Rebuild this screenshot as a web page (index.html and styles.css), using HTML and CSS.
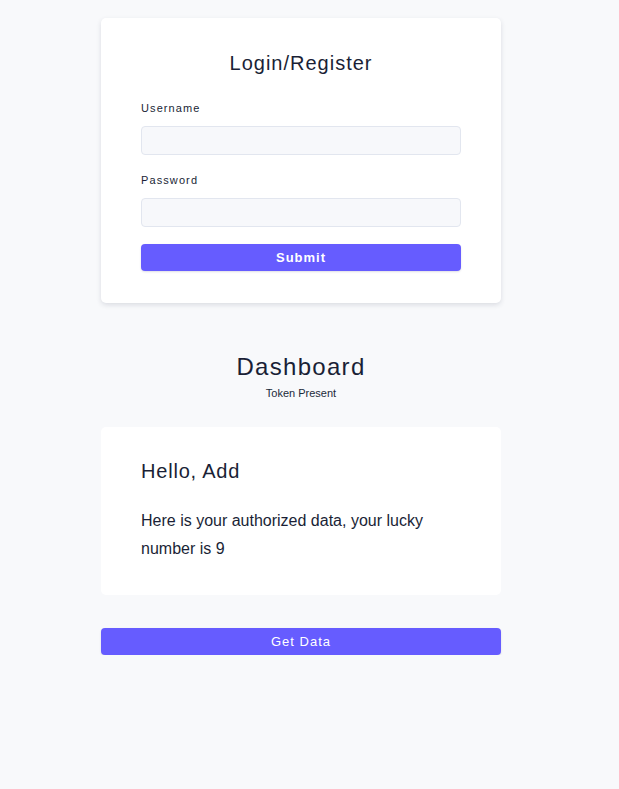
FILE: index.html
```html
<!DOCTYPE html>
<html lang="en">
<head>
<meta charset="utf-8">
<title>Login/Register</title>
<link rel="stylesheet" href="styles.css">
</head>
<body>
<main class="page">
  <section class="card card-login">
    <h1 class="card-title">Login/Register</h1>
    <form class="form">
      <label class="label" for="username">Username</label>
      <input class="input" id="username" type="text">
      <label class="label label-pw" for="password">Password</label>
      <input class="input" id="password" type="password">
      <button class="btn btn-submit" type="button">Submit</button>
    </form>
  </section>

  <header class="dash-head">
    <h2 class="dash-title">Dashboard</h2>
    <p class="dash-sub">Token Present</p>
  </header>

  <section class="card card-data">
    <h3 class="hello">Hello, Add</h3>
    <p class="data-text">Here is your authorized data, your lucky number is 9</p>
  </section>

  <button class="btn btn-get" type="button">Get Data</button>
</main>
</body>
</html>
```

FILE: styles.css
```css
html, body {
  margin: 0;
  padding: 0;
  background: #f8f9fb;
  color: #1a1f36;
  font-family: "Liberation Sans", Arial, sans-serif;
}

.page {
  width: 400px;
  margin: 0 0 0 101px;
  padding-top: 18px;
  display: flex;
  flex-direction: column;
}

.card {
  background: #ffffff;
  border-radius: 5px;
  padding: 32px 40px;
}

.card-login {
  box-shadow: 0 2px 5px rgba(40, 50, 80, 0.14);
}

.card-title {
  margin: 2px 0 27px;
  font-size: 20px;
  font-weight: 400;
  letter-spacing: 1px;
  text-align: center;
  line-height: 23px;
}

.form {
  display: flex;
  flex-direction: column;
}

.label {
  font-size: 11px;
  letter-spacing: 1.1px;
  line-height: 13px;
  color: #1a1f36;
}

.label-pw {
  margin-top: 19px;
}

.input {
  margin-top: 11px;
  height: 29px;
  box-sizing: border-box;
  border: 1px solid #e2e6ef;
  border-radius: 4px;
  background: #f7f8fb;
  padding: 0 8px;
  font: inherit;
}

.btn {
  height: 27px;
  border: none;
  border-radius: 4px;
  background: #665cff;
  color: #ffffff;
  font-family: "Liberation Sans", Arial, sans-serif;
  font-size: 13px;
  letter-spacing: 1px;
  padding: 0;
  box-shadow: 0 1px 2px rgba(40, 40, 90, 0.15);
}

.btn-submit {
  margin-top: 17px;
  font-weight: 700;
}

.dash-head {
  margin-top: 50px;
  text-align: center;
}

.dash-title {
  margin: 0;
  font-size: 24px;
  font-weight: 400;
  letter-spacing: 1.3px;
  line-height: 28px;
}

.dash-sub {
  margin: 6px 0 0;
  font-size: 11px;
  line-height: 13px;
  color: #1b2a3a;
}

.card-data {
  margin-top: 27px;
  padding: 33px 40px 32px;
}

.hello {
  margin: 0;
  font-size: 20px;
  font-weight: 400;
  letter-spacing: 0.8px;
  line-height: 23px;
}

.data-text {
  margin: 24px 0 0;
  font-size: 16px;
  line-height: 28px;
  padding-right: 30px;
}

.btn-get {
  margin-top: 33px;
  font-weight: 400;
}
```
